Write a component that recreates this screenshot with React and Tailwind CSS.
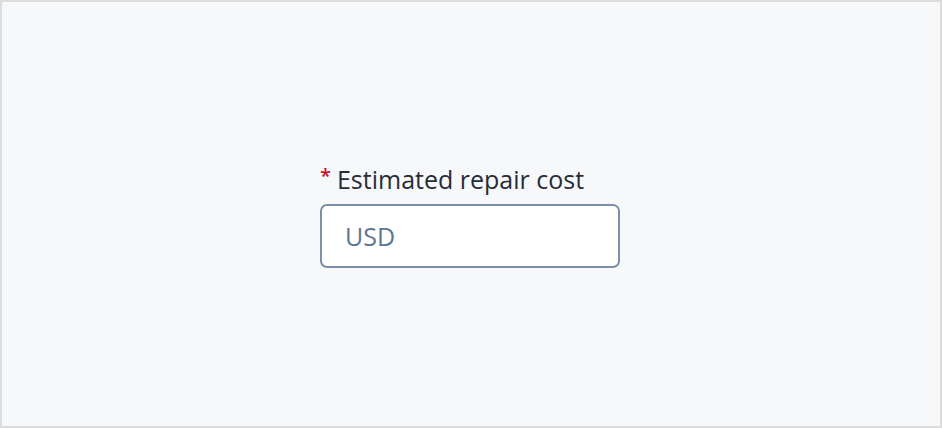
export default function App() {
  return (
    <div className="w-[942px] h-[428px] border-2 border-[#dcdcdc] bg-[#f7f8fa] flex items-center justify-center font-['Open_Sans','Noto_Sans',sans-serif]">
      <div className="flex flex-col w-[300px] mt-[3px] mr-[2px]">
        <label className="flex items-start gap-[6px] text-[25px] leading-[32px] text-[#262d38] mb-[9px]">
          <span className="text-[#c8102e] text-[20px] leading-[20px] mt-[3px] font-semibold">*</span>
          <span>Estimated repair cost</span>
        </label>
        <input
          type="text"
          placeholder="USD"
          className="h-[64px] w-full rounded-[7px] border-2 border-[#7e90a9] bg-white px-[23px] text-[25px] text-[#262d38] placeholder:text-[#5f7590] outline-none"
        />
      </div>
    </div>
  );
}
